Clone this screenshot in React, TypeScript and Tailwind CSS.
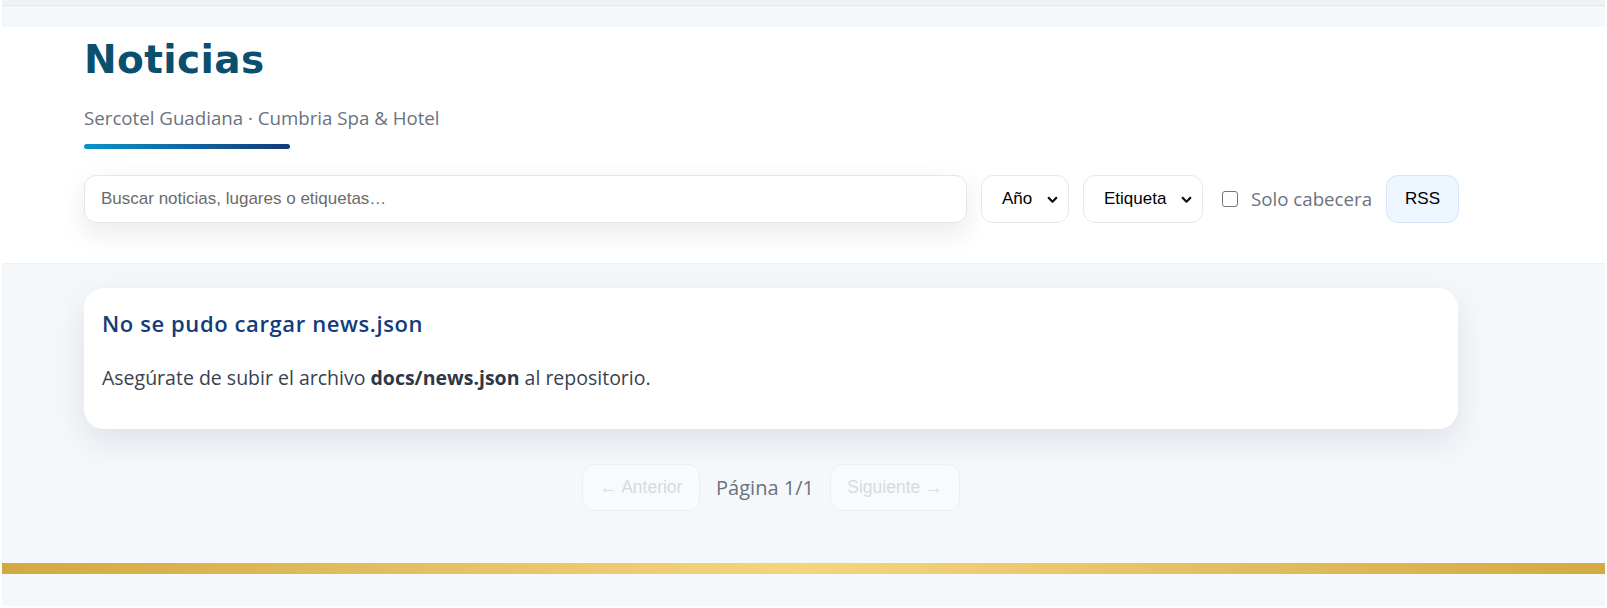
import React from 'react';

const heading = "font-['DejaVu_Sans',sans-serif]";
const body = "font-['Open_Sans','Noto_Sans',sans-serif]";
const ui = "font-['Liberation_Sans',Arial,sans-serif]";

const Chevron = () => (
  <svg width="13" height="13" viewBox="0 0 12 12" className="shrink-0">
    <path d="M2.5 4.5 6 8l3.5-3.5" fill="none" stroke="#111" strokeWidth="2" strokeLinecap="round" strokeLinejoin="round" />
  </svg>
);

const Select: React.FC<{ label: string; w: string }> = ({ label, w }) => (
  <div
    className={`${ui} ${w} h-12 flex items-center justify-between pl-5 pr-[9px] rounded-xl border border-[#e5e7eb] bg-white text-[17px] text-black`}
  >
    <span>{label}</span>
    <Chevron />
  </div>
);

const PageButton: React.FC<{ children: React.ReactNode; w: string }> = ({ children, w }) => (
  <button
    disabled
    className={`${ui} ${w} h-[47px] rounded-xl border border-[#eceff3] bg-[#f8fafc] text-[17.5px] text-[#d6dadf]`}
  >
    {children}
  </button>
);

export default function App() {
  return (
    <div className="w-full h-[608px] bg-white px-[2px] pb-[2px] overflow-hidden">
      <div className="h-full bg-[#f5f8fb] flex flex-col">
        {/* top strip */}
        <div className="h-[6px] bg-[#f1f1f1] border-b border-[#e6e4e4]" />
        <div className="h-[21px]" />

        {/* header */}
        <header className="bg-white border-b border-[#eef1f5] pl-[82px] pt-[10px] pb-[40px]">
          <h1 className={`${heading} text-[39px] leading-[46px] font-bold text-[#0a4f6e] tracking-[0.01em]`}>
            Noticias
          </h1>
          <p className={`${body} mt-[23px] text-[18.7px] leading-[24px] text-[#6b7280]`}>
            Sercotel Guadiana · Cumbria Spa &amp; Hotel
          </p>
          <div className="mt-[14px] h-[5px] w-[206px] rounded-full bg-gradient-to-r from-[#0894c8] to-[#123a7a]" />

          <div className="mt-[26px] flex items-center gap-[14px]">
            <div
              className={`${ui} w-[883px] h-12 flex items-center px-4 rounded-xl border border-[#e5e7eb] bg-white text-[17px] text-[#6b6b6b] shadow-[0_10px_28px_rgba(15,23,42,0.09)]`}
            >
              Buscar noticias, lugares o etiquetas…
            </div>
            <Select label="Año" w="w-[88px]" />
            <Select label="Etiqueta" w="w-[120px]" />
            <label className={`${body} flex items-center gap-[13px] text-[18.7px] text-[#6b7280] ml-[5px]`}>
              <span className="w-[16px] h-[16px] rounded-[3px] border-[1.5px] border-[#767676] bg-white" />
              Solo cabecera
            </label>
            <button
              className={`${ui} w-[73px] h-12 rounded-xl border border-[#d6e5f8] bg-[#eef6ff] text-[17px] text-black`}
            >
              RSS
            </button>
          </div>
        </header>

        {/* content */}
        <main className="pl-[82px] pt-[24px]">
          <div className="w-[1374px] h-[141px] rounded-[20px] bg-white shadow-[0_12px_32px_rgba(15,23,42,0.10)] px-[18px] pt-[21px]">
            <h2 className={`${body} text-[22px] leading-[28px] font-semibold tracking-[0.6px] text-[#123c7a]`}>
              No se pudo cargar news.json
            </h2>
            <p className={`${body} mt-[28px] text-[19.5px] leading-[26px] text-[#374151]`}>
              Asegúrate de subir el archivo <strong className="font-bold text-[#2d3748]">docs/news.json</strong> al
              repositorio.
            </p>
          </div>

          <nav className="w-[1374px] mt-[35px] flex items-center justify-center gap-[16px]">
            <PageButton w="w-[118px]">← Anterior</PageButton>
            <span className={`${body} text-[20px] text-[#6b7280]`}>Página 1/1</span>
            <PageButton w="w-[130px]">Siguiente →</PageButton>
          </nav>
        </main>

        <div className="flex-1" />
        <div className="h-[11px] bg-gradient-to-r from-[#d2a941] via-[#f4d57f] to-[#d3aa43]" />
        <div className="h-[32px]" />
      </div>
    </div>
  );
}
